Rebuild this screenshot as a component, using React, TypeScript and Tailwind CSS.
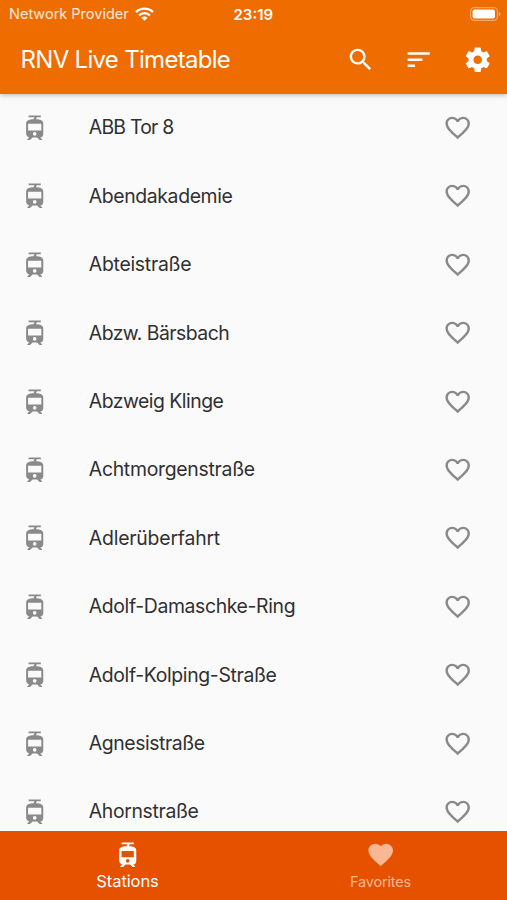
import type { ReactNode } from 'react'
import { MdFavorite, MdFavoriteBorder, MdSearch, MdSort, MdTram } from 'react-icons/md'

type Station = { name: string; tracking: string }

const stations: Station[] = [
  { name: 'ABB Tor 8', tracking: 'tracking-[-0.75px]' },
  { name: 'Abendakademie', tracking: 'tracking-[-0.37px]' },
  { name: 'Abteistraße', tracking: 'tracking-[-0.27px]' },
  { name: 'Abzw. Bärsbach', tracking: 'tracking-[-0.53px]' },
  { name: 'Abzweig Klinge', tracking: 'tracking-[-0.5px]' },
  { name: 'Achtmorgenstraße', tracking: 'tracking-[-0.28px]' },
  { name: 'Adlerüberfahrt', tracking: 'tracking-[-0.2px]' },
  { name: 'Adolf-Damaschke-Ring', tracking: 'tracking-[-0.36px]' },
  { name: 'Adolf-Kolping-Straße', tracking: 'tracking-[-0.35px]' },
  { name: 'Agnesistraße', tracking: 'tracking-[-0.42px]' },
  { name: 'Ahornstraße', tracking: 'tracking-[-0.35px]' },
]

function CogIcon() {
  return (
    <svg className="size-[29.4px]" viewBox="0 0 24 24" fill="currentColor">
      <path d="M12 15.5A3.5 3.5 0 0 1 8.5 12 3.5 3.5 0 0 1 12 8.5a3.5 3.5 0 0 1 3.5 3.5 3.5 3.5 0 0 1-3.5 3.5m7.43-2.53c.04-.32.07-.64.07-.97s-.03-.66-.07-1l2.11-1.63c.19-.15.24-.42.12-.64l-2-3.46c-.12-.22-.39-.31-.61-.22l-2.49 1c-.52-.39-1.06-.73-1.69-.98l-.37-2.65A.506.506 0 0 0 14 2h-4c-.25 0-.46.18-.5.42l-.37 2.65c-.63.25-1.17.59-1.69.98l-2.49-1c-.22-.09-.49 0-.61.22l-2 3.46c-.13.22-.07.49.12.64L4.57 11c-.04.34-.07.67-.07 1s.03.65.07.97l-2.11 1.66c-.19.15-.25.42-.12.64l2 3.46c.12.22.39.3.61.22l2.49-1.01c.52.4 1.06.74 1.69.99l.37 2.65c.04.24.25.42.5.42h4c.25 0 .46-.18.5-.42l.37-2.65c.63-.26 1.17-.59 1.69-.99l2.49 1.01c.22.08.49 0 .61-.22l2-3.46c.12-.22.07-.49-.12-.64z" />
    </svg>
  )
}

// Same tram as in the tab bar, with a larger windscreen
function StationIcon() {
  return (
    <svg className="size-[29.4px] shrink-0 text-[#8a8a8a]" viewBox="0 0 24 24" fill="currentColor">
      <path
        fillRule="evenodd"
        d="M19 16.94V8.5c0-2.79-2.61-3.4-6.01-3.49l.76-1.51H17V2H7v1.5h4.75l-.76 1.52C7.86 5.11 5 5.73 5 8.5v8.44c0 1.45 1.19 2.66 2.59 2.97L6 21.5v.5h2.23l2-2H14l2 2h2v-.5L16.5 20h-.08c1.69 0 2.58-1.37 2.58-3.06zM12 18.5a1.5 1.5 0 1 1 0-3 1.5 1.5 0 0 1 0 3zM17.4 14.2H6.6V8.8h10.8z"
      />
    </svg>
  )
}

function StatusBar() {
  return (
    <div className="flex h-[26px] items-center pt-[2px] pr-[6px] pl-[9px] text-[14.5px] leading-none">
      <div className="flex w-[224.5px] items-center gap-[6px] text-white/85">
        <span className="whitespace-nowrap">Network Provider</span>
        <svg className="h-[14px] w-[19px]" viewBox="0 0 19 14" fill="none" stroke="#fff" strokeWidth="2.3">
          <path d="M1 5.1a12.2 12.2 0 0 1 17 0" />
          <path d="M4.1 8.4a7.7 7.7 0 0 1 10.8 0" />
          <path d="M9.5 13.8 6.4 10.7a4.4 4.4 0 0 1 6.2 0z" fill="#fff" stroke="none" />
        </svg>
      </div>
      <span className="text-[15px] font-semibold">23:19</span>
      <svg className="ml-auto h-[14px] w-[31px]" viewBox="0 0 31 14">
        <rect x="0.6" y="0.6" width="26.8" height="12.8" rx="3.8" fill="none" stroke="#fff" strokeOpacity="0.4" strokeWidth="1.2" />
        <rect x="2.6" y="2.6" width="22.4" height="8.8" rx="2" fill="#fff" />
        <path d="M28.8 4.7c2.2 1 2.2 3.6 0 4.6z" fill="#fff" fillOpacity="0.5" />
      </svg>
    </div>
  )
}

function AppBar() {
  return (
    <header className="relative z-10 h-[93.5px] shrink-0 bg-[#ef6c00] text-white shadow-[0_1px_5px_rgba(0,0,0,0.28)]">
      <StatusBar />
      <div className="flex h-[67px] items-center justify-between pr-[14.5px] pl-[20.5px]">
        <h1 className="text-[24px] leading-none tracking-[-0.7px] whitespace-nowrap">RNV Live Timetable</h1>
        <div className="flex items-center gap-[29.4px]">
          <MdSearch size={29.4} />
          <MdSort size={29.4} />
          <CogIcon />
        </div>
      </div>
    </header>
  )
}

function StationRow({ name, tracking }: Station) {
  return (
    <li className="flex h-[68.4px] shrink-0 items-center pr-[34.2px] pl-[20px]">
      <StationIcon />
      <span className={`ml-[39.4px] flex-1 pt-[1px] text-[19.4px] leading-none whitespace-nowrap text-[#303030] ${tracking}`}>{name}</span>
      <MdFavoriteBorder size={29.4} className="shrink-0 text-[#8a8a8a]" />
    </li>
  )
}

function Tab({ icon, children, className }: { icon: ReactNode; children: ReactNode; className: string }) {
  return (
    <div className={`flex flex-1 flex-col items-center pt-[8.5px] leading-none ${className}`}>
      {icon}
      {children}
    </div>
  )
}

export default function App() {
  return (
    <div className="flex h-[900px] w-[507px] flex-col overflow-hidden bg-[#fafafa] font-['Inter',sans-serif]">
      <AppBar />
      <ul className="flex min-h-0 flex-1 flex-col overflow-hidden">
        {stations.map((s) => (
          <StationRow key={s.name} {...s} />
        ))}
      </ul>
      <nav className="flex h-[68.6px] shrink-0 bg-[#e65100]">
        <Tab icon={<MdTram size={29.4} />} className="pl-[1px] text-white">
          <span className="mt-[3.5px] text-[16.5px] tracking-[-0.1px]">Stations</span>
        </Tab>
        <Tab icon={<MdFavorite size={29.4} />} className="text-[#f9b794]">
          <span className="mt-[6px] text-[14.5px] tracking-[-0.2px]">Favorites</span>
        </Tab>
      </nav>
    </div>
  )
}
